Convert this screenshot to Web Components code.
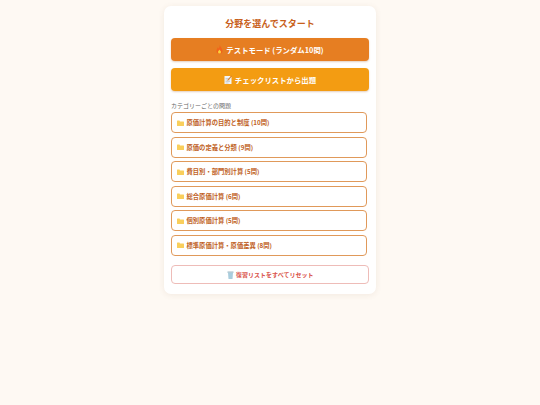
<!DOCTYPE html>
<html lang="ja"><head><meta charset="utf-8"><title>分野</title>
<style>
html,body{margin:0;height:100%;background:#fef9f3;font-family:"Noto Sans CJK JP","Noto Sans",sans-serif}
body{display:flex;justify-content:center;align-items:flex-start;padding-top:6px;box-sizing:border-box}
</style></head><body>
<start-card>
<span slot="title">分野を選んでスタート</span>
<big-button color="#e67e22"><svg slot="icon" width="7" height="9" viewBox="0 0 14 18"><path d="M7.5 0c.5 3.500 5.500 6 5.500 11.500a6 6 0 0 1-12 0C1 8.500 3 7 3.500 4.500c1 .8 1.600 1.700 1.800 2.800C6.500 5.500 7.500 3 7.500 0z" fill="#f2631c"/><path d="M7 9c.8 1.800 3 3 3 5a3 3 0 0 1-6 0c0-2 2.200-3.200 3-5z" fill="#fdd13a"/></svg>テストモード (ランダム10問)</big-button>
<big-button color="#f39c12"><svg slot="icon" width="8" height="9" viewBox="0 0 16 18"><path d="M1 2h11l3 3v13H1z" fill="#f2f4f5"/><path d="M3 7h7M3 10h9M3 13h9M3 16h6" stroke="#a5afb7" stroke-width="1"/><path d="M14.500 1l1.500 1.500-7 8-2.500 1 1-2.500z" fill="#d9822b"/></svg>チェックリストから出題</big-button>
<section-label>カテゴリーごとの問題</section-label>
<category-item>原価計算の目的と制度 (10問)</category-item>
<category-item>原価の定義と分類 (9問)</category-item>
<category-item>費目別・部門別計算 (5問)</category-item>
<category-item>総合原価計算 (6問)</category-item>
<category-item>個別原価計算 (5問)</category-item>
<category-item>標準原価計算・原価差異 (8問)</category-item>
<reset-button>復習リストをすべてリセット</reset-button>
</start-card>
<script>
function def(name, css, html){
  customElements.define(name, class extends HTMLElement{
    constructor(){super();this.attachShadow({mode:'open'}).innerHTML='<style>'+css+'</style>'+html;}
    connectedCallback(){const c=this.getAttribute('color');if(c)this.style.setProperty('--c',c);}
  });
}
def('start-card',`:host{display:block;box-sizing:border-box;width:212px;height:288px;background:#fff;border-radius:7px;padding:11px 7px 0;box-shadow:0 1px 6px rgba(120,80,40,.09)}
h1{margin:0 0 7px;height:14px;line-height:14px;font-size:9px;font-weight:700;color:#c8601a;text-align:center}`,
`<h1><slot name="title"></slot></h1><slot></slot>`);
def('big-button',`:host{display:flex;align-items:center;justify-content:center;gap:3px;height:23px;margin-bottom:7px;border-radius:4px;background:var(--c);color:#fff;font-size:7.4px;font-weight:700;box-shadow:0 1px 2px rgba(150,80,20,.28);white-space:nowrap}`,
`<slot name="icon"></slot><span><slot></slot></span>`);
def('section-label',`:host{display:block;margin-top:10px;height:7.5px;line-height:10px;font-size:6px;color:#666}`,`<slot></slot>`);
def('category-item',`:host{display:flex;align-items:center;gap:2.5px;box-sizing:border-box;width:196px;height:21px;margin:3.5px 0 0;padding-left:5px;background:#fff;border:1px solid #e0995a;border-radius:4px;color:#c05f1e;font-size:6.3px;font-weight:700;white-space:nowrap}
svg{flex:none}`,
`<svg width="7" height="6" viewBox="0 0 14 12"><path d="M0 2a1 1 0 0 1 1-1h4l1 2h7a1 1 0 0 1 1 1v7a1 1 0 0 1-1 1H1a1 1 0 0 1-1-1z" fill="#f9cf5c"/></svg><span><slot></slot></span>`);
def('reset-button',`:host{display:flex;align-items:center;justify-content:center;gap:2.5px;box-sizing:border-box;height:19px;margin-top:9.5px;background:#fff;border:1px solid #eebcb8;border-radius:4px;color:#d9534a;font-size:6px;font-weight:700;white-space:nowrap}`,
`<svg width="7" height="8" viewBox="0 0 14 16"><path d="M1 1h12v2.500H1z" fill="#9fb8c4"/><path d="M2 3.500h10l-1 12.500H3z" fill="#a9cddd"/></svg><span><slot></slot></span>`);
</script>
</body></html>
